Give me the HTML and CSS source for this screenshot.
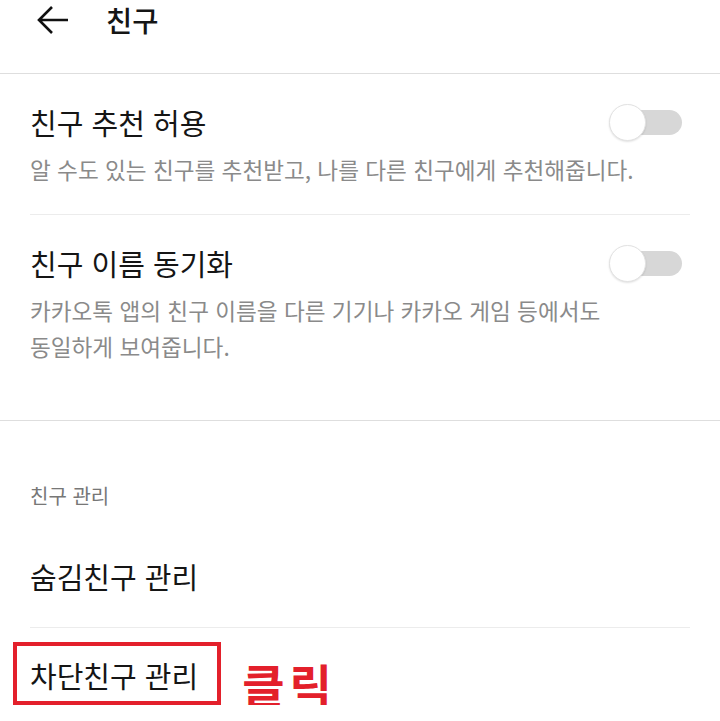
FILE: index.html
```html
<!DOCTYPE html>
<html lang="ko">
<head>
<meta charset="utf-8">
<link rel="stylesheet" href="styles.css">
</head>
<body>
<div class="header">
  <svg class="back" width="34" height="30" viewBox="0 0 34 30" aria-hidden="true">
    <path d="M32 15 H3 M16 2 L3 15 L16 28" fill="none" stroke="#111" stroke-width="2.6" stroke-linecap="butt" stroke-linejoin="miter"/>
  </svg>
  <div class="title">친구</div>
</div>

<div class="setting first">
  <div class="row">
    <div class="name">친구 추천 허용</div>
    <div class="toggle"><span class="knob"></span></div>
  </div>
  <div class="desc">알 수도 있는 친구를 추천받고, 나를 다른 친구에게 추천해줍니다.</div>
</div>

<div class="setting second">
  <div class="row">
    <div class="name">친구 이름 동기화</div>
    <div class="toggle"><span class="knob"></span></div>
  </div>
  <div class="desc">카카오톡 앱의 친구 이름을 다른 기기나 카카오 게임 등에서도 동일하게 보여줍니다.</div>
</div>

<div class="section">
  <div class="section-title">친구 관리</div>
  <div class="item hidden">숨김친구 관리</div>
  <div class="item blocked">
    <span class="mark">차단친구 관리</span>
    <span class="click">클릭</span>
  </div>
</div>
</body>
</html>
```

FILE: styles.css
```css
html, body {
  margin: 0;
  padding: 0;
  background: #fff;
}
body {
  width: 720px;
  font-family: "Noto Sans CJK KR", "Noto Sans", sans-serif;
  color: #151515;
  overflow: hidden;
}
.header {
  height: 74px;
  box-sizing: border-box;
  border-bottom: 1px solid #dedede;
  display: flex;
  align-items: flex-start;
  padding: 5px 0 0 36px;
}
.back {
  display: block;
}
.title {
  margin-left: 36px;
  font-size: 28.5px;
  font-weight: 500;
  line-height: 30px;
}
.setting {
  margin: 0 30px;
}
.setting.first {
  padding: 30px 0 26px;
  border-bottom: 1px solid #ececec;
}
.setting.second {
  padding: 30px 0 55px;
}
.row {
  display: flex;
  align-items: center;
  justify-content: space-between;
  height: 36px;
}
.name {
  font-size: 29px;
  line-height: 36px;
}
.desc {
  margin-top: 12px;
  max-width: 615px;
  font-size: 22.6px;
  line-height: 36px;
  color: #8a8a8a;
  word-break: keep-all;
}
.toggle {
  position: relative;
  width: 62px;
  height: 25px;
  border-radius: 13px;
  background: #d7d7d7;
  margin-right: 8px;
}
.knob {
  position: absolute;
  left: -11px;
  top: -6px;
  width: 35px;
  height: 35px;
  border-radius: 50%;
  background: #fff;
  border: 1px solid #e2e2e2;
  box-shadow: 0 1px 2px rgba(0,0,0,0.12);
}
.section {
  border-top: 1px solid #dedede;
  padding-top: 62px;
}
.section-title {
  margin: 0 30px;
  font-size: 20px;
  line-height: 26px;
  color: #777;
}
.item {
  margin: 0 30px;
  font-size: 29px;
  line-height: 36px;
}
.item.hidden {
  padding: 49px 0 33px;
  border-bottom: 1px solid #ececec;
}
.item.blocked {
  display: flex;
  align-items: center;
  padding-top: 14px;
  margin-left: 13px;
}
.mark {
  display: inline-block;
  border: 4px solid #e3202b;
  padding: 11px 19px 8px 13px;
  line-height: 36px;
}
.click {
  margin-left: 21px;
  margin-top: 18px;
  font-size: 46px;
  font-weight: 700;
  color: #e3202b;
  line-height: 44px;
  letter-spacing: 5px;
}
```
